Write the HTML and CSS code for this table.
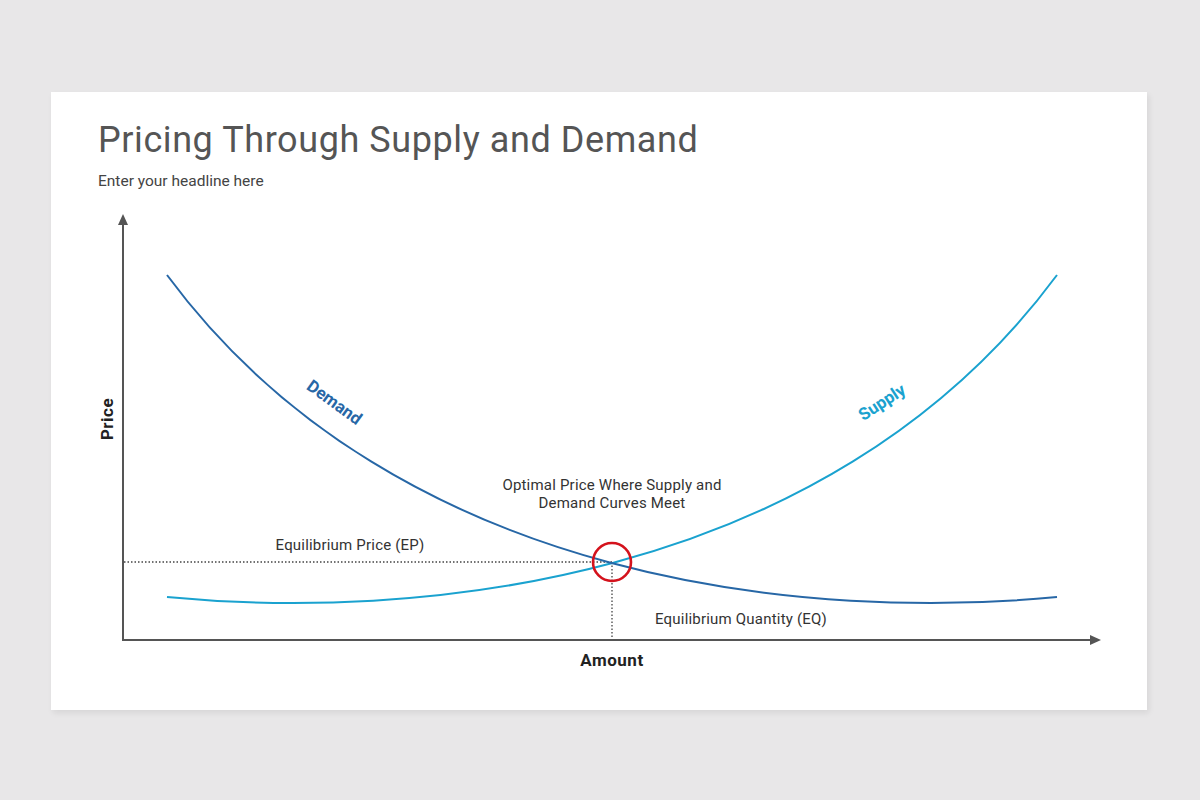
FILE: index.html
```html
<!DOCTYPE html>
<html>
<head>
<meta charset="utf-8">
<link rel="stylesheet" href="styles.css">
</head>
<body>
<div class="slide">
  <header class="head">
    <h1 class="title">Pricing Through Supply and Demand</h1>
    <p class="subtitle">Enter your headline here</p>
  </header>
  <svg class="chart" width="1096" height="510" viewBox="51 200 1096 510" xmlns="http://www.w3.org/2000/svg">
    <!-- axes -->
    <line x1="123" y1="224" x2="123" y2="640" class="axis"/>
    <polygon points="123,214 118,225 128,225" class="arrow"/>
    <line x1="122" y1="640" x2="1091" y2="640" class="axis"/>
    <polygon points="1101,640 1090,635 1090,645" class="arrow"/>
    <!-- dotted guides -->
    <line x1="124" y1="562" x2="612" y2="562" class="dots"/>
    <line x1="612" y1="562" x2="612" y2="639" class="dots"/>
    <!-- curves -->
    <path d="M1057,275 C824,590 404,620 167,597" class="supply"/>
    <path d="M167,275 C400,590 820,620 1057,597" class="demand"/>
    <circle cx="612" cy="562" r="19" class="ring"/>
    <!-- labels -->
    <text x="350" y="550" class="lbl" text-anchor="middle">Equilibrium Price (EP)</text>
    <text x="612" y="490" class="lbl" text-anchor="middle">Optimal Price Where Supply and</text>
    <text x="612" y="508" class="lbl" text-anchor="middle">Demand Curves Meet</text>
    <text x="741" y="624" class="lbl" text-anchor="middle">Equilibrium Quantity (EQ)</text>
    <text x="612" y="666" class="axlbl" text-anchor="middle">Amount</text>
    <text x="0" y="0" class="axlbl" text-anchor="middle" transform="translate(113,419) rotate(-90)">Price</text>
    <text x="0" y="0" class="dlbl" text-anchor="middle" transform="translate(331,407) rotate(36)">Demand</text>
    <text x="0" y="0" class="slbl" text-anchor="middle" transform="translate(885,407) rotate(-33)">Supply</text>
  </svg>
</div>
</body>
</html>
```
FILE: styles.css
```css
html, body {
  margin: 0;
  padding: 0;
}
body {
  background: #e8e7e8;
  width: 1200px;
  height: 800px;
  overflow: hidden;
  font-family: Roboto, "Liberation Sans", sans-serif;
}
.slide {
  margin: 92px 0 0 51px;
  width: 1096px;
  height: 618px;
  background: #ffffff;
  box-shadow: 2px 3px 6px rgba(0,0,0,0.08);
  display: flex;
  flex-direction: column;
}
.head {
  box-sizing: border-box;
  height: 108px;
  padding: 27px 0 0 47px;
}
.title {
  margin: 0;
  font-size: 36px;
  line-height: 43px;
  font-weight: 400;
  color: #555555;
  letter-spacing: 0.58px;
}
.subtitle {
  margin: 10px 0 0 0;
  font-size: 15.5px;
  line-height: 18px;
  color: #444444;
  letter-spacing: 0;
}
.chart {
  display: block;
}
.axis {
  stroke: #555555;
  stroke-width: 2;
}
.arrow {
  fill: #555555;
}
.dots {
  stroke: #444444;
  stroke-width: 1.3;
  stroke-dasharray: 1.5 2;
}
.demand {
  fill: none;
  stroke: #2767a6;
  stroke-width: 2;
}
.supply {
  fill: none;
  stroke: #1aa2cf;
  stroke-width: 2;
}
.ring {
  fill: none;
  stroke: #d4121c;
  stroke-width: 2.6;
}
.lbl {
  font-family: Roboto, "Liberation Sans", sans-serif;
  font-size: 15px;
  letter-spacing: 0.2px;
  fill: #333333;
}
.axlbl {
  font-family: Roboto, "Liberation Sans", sans-serif;
  font-size: 17px;
  letter-spacing: 0.5px;
  font-weight: 700;
  fill: #222222;
}
.dlbl {
  font-family: Roboto, "Liberation Sans", sans-serif;
  font-size: 17px;
  font-weight: 700;
  fill: #2767a6;
}
.slbl {
  font-family: Roboto, "Liberation Sans", sans-serif;
  font-size: 17px;
  font-weight: 700;
  fill: #1aa2cf;
}
```
